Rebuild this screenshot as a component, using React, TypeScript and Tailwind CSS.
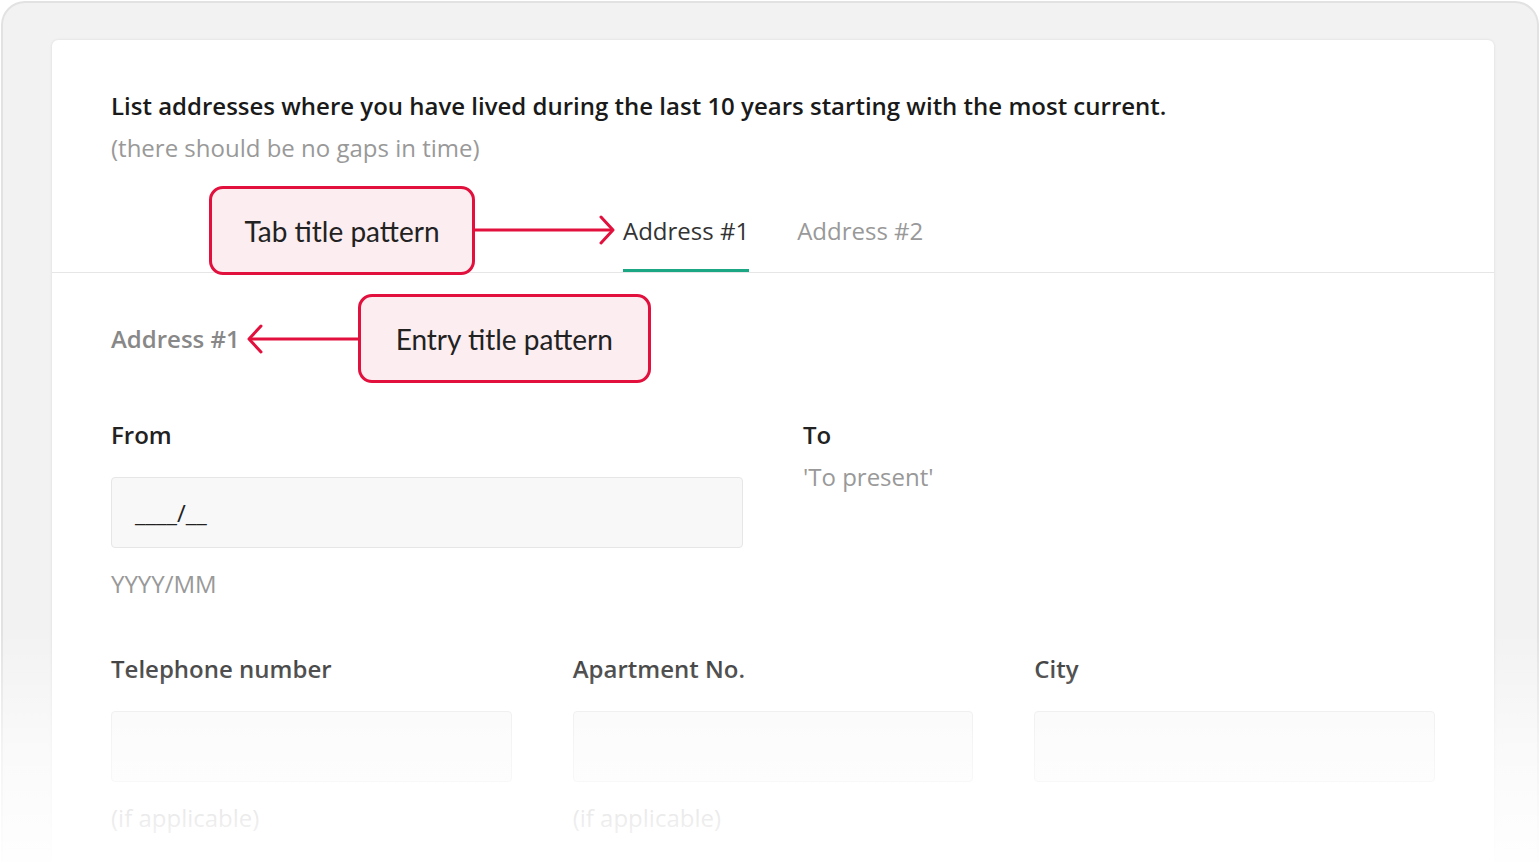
import React from "react";

const ArrowRight = ({ width }: { width: number }) => (
  <svg width={width} height="32" viewBox={`0 0 ${width} 32`} fill="none" aria-hidden="true">
    <line x1="0" y1="16" x2={width - 2} y2="16" stroke="#e1103d" strokeWidth="3" />
    <polyline
      points={`${width - 14},3 ${width - 2},16 ${width - 14},29`}
      stroke="#e1103d"
      strokeWidth="3"
      strokeLinecap="round"
      strokeLinejoin="round"
      fill="none"
    />
  </svg>
);

const ArrowLeft = ({ width }: { width: number }) => (
  <svg width={width} height="32" viewBox={`0 0 ${width} 32`} fill="none" aria-hidden="true">
    <line x1="2" y1="16" x2={width} y2="16" stroke="#e1103d" strokeWidth="3" />
    <polyline
      points="14,3 2,16 14,29"
      stroke="#e1103d"
      strokeWidth="3"
      strokeLinecap="round"
      strokeLinejoin="round"
      fill="none"
    />
  </svg>
);

const Callout = ({ label, className }: { label: string; className: string }) => (
  <div
    className={`flex items-center justify-center rounded-[14px] border-[3px] border-[#e1103d] bg-[#fcedf0] font-['Lato',sans-serif] text-[28px] text-[#222] ${className}`}
  >
    {label}
  </div>
);

const Field = ({ label, hint, value }: { label: string; hint?: string; value?: string }) => (
  <div className="flex flex-col">
    <div className="h-[30px] text-[24px] leading-[30px] font-semibold text-[#222]">{label}</div>
    <div className="mt-[27px] flex h-[71px] items-center rounded-[4px] border border-[#e6e6e6] bg-[#f8f8f8] px-[23px] text-[24px] text-[#222]">
      {value}
    </div>
    {hint && <div className="mt-[21px] h-[30px] text-[24px] leading-[30px] text-[#999]">{hint}</div>}
  </div>
);

export default function App() {
  return (
    <div className="relative h-[862px] w-[1540px] overflow-hidden bg-white font-['Open_Sans',sans-serif]">
      {/* GREY FRAME */}
      <div className="ml-px mr-px mt-px h-[900px] rounded-t-[24px] border-2 border-b-0 border-[#e2e2e2] bg-[#f2f2f2] pl-[49px] pr-[43px] pt-[37px]">
        {/* CARD */}
        <div className="h-[900px] rounded-[6px] bg-white shadow-[0_0_3px_rgba(0,0,0,0.1)]">
          {/* HEADER */}
          <div className="px-[59px] pt-[49px]">
            <div className="text-[24px] leading-[34px] font-semibold text-[#1a1a1a]">
              List addresses where you have lived during the last 10 years starting with the most current.
            </div>
            <div className="mt-[8px] text-[24px] leading-[34px] text-[#999]">(there should be no gaps in time)</div>
          </div>

          {/* TABS */}
          <div className="mt-[21px] flex h-[87px] items-start border-b border-[#e6e6e6] px-[59px]">
            <Callout label="Tab title pattern" className="relative z-10 ml-[98px] h-[89px] w-[266px]" />
            <div className="mt-[28px]">
              <ArrowRight width={140} />
            </div>
            <div className="ml-[8px] flex h-full items-center border-b-[3px] border-[#1ba784] pt-[6px] text-[24px] text-[#333]">
              Address #1
            </div>
            <div className="ml-[48px] flex h-full items-center border-b-[3px] border-transparent pt-[6px] text-[24px] text-[#999]">
              Address #2
            </div>
          </div>

          {/* ENTRY */}
          <div className="px-[59px] pt-[21px]">
            <div className="flex items-center">
              <div className="text-[24px] font-semibold text-[#888]">Address #1</div>
              <div className="ml-[7px]">
                <ArrowLeft width={111} />
              </div>
              <Callout label="Entry title pattern" className="h-[89px] w-[293px]" />
            </div>

            <div className="mt-[37px] grid grid-cols-2 gap-x-[60px]">
              <Field label="From" hint="YYYY/MM" value="____/__" />
              <div className="flex flex-col">
                <div className="h-[30px] text-[24px] leading-[30px] font-semibold text-[#222]">To</div>
                <div className="mt-[12px] h-[30px] text-[24px] leading-[30px] text-[#999]">'To present'</div>
              </div>
            </div>

            <div className="mt-[55px] grid grid-cols-3 gap-x-[61px]">
              <Field label="Telephone number" hint="(if applicable)" />
              <Field label="Apartment No." hint="(if applicable)" />
              <Field label="City" />
            </div>
          </div>
        </div>
      </div>

      {/* BOTTOM FADE */}
      <div className="pointer-events-none absolute inset-x-0 bottom-0 h-[230px] bg-gradient-to-b from-white/0 via-white/60 to-white/95" />
    </div>
  );
}
